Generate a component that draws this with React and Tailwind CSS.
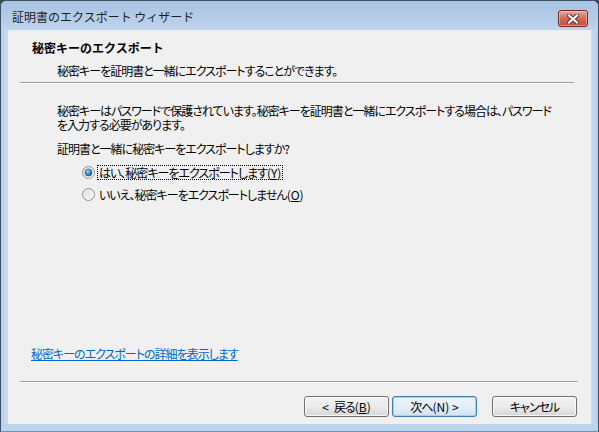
import React from "react";

function Radio({ checked }) {
  return (
    <svg width="13" height="13" viewBox="0 0 13 13" className="shrink-0">
      <defs>
        <linearGradient id={checked ? "rg1" : "rg0"} x1="0" y1="0" x2="1" y2="1">
          <stop offset="0" stopColor="#d9d9d9" />
          <stop offset="1" stopColor="#ffffff" />
        </linearGradient>
        <radialGradient id={checked ? "dot1" : "dot0"} cx="0.4" cy="0.35" r="0.7">
          <stop offset="0" stopColor="#a8dcfa" />
          <stop offset="0.5" stopColor="#3a8fd6" />
          <stop offset="1" stopColor="#1b4f8f" />
        </radialGradient>
      </defs>
      <circle cx="6.5" cy="6.5" r="6" fill={`url(#${checked ? "rg1" : "rg0"})`} stroke="#8e8f8f" strokeWidth="1" />
      <circle cx="6.5" cy="6.5" r="4.6" fill="none" stroke="#f4f4f4" strokeWidth="0.8" />
      {checked && <circle cx="6.5" cy="6.5" r="3.6" fill="url(#dot1)" stroke="#1f5a96" strokeWidth="0.6" />}
    </svg>
  );
}

export default function App() {
  return (
    <div className="w-[599px] h-[432px] bg-[#3a4656] overflow-hidden">
      <div className="w-full h-full flex flex-col rounded-t-[6px] border border-[#3b4f66] border-b-[#48a8c0] bg-[#bcd3ec]">
        {/* title bar */}
        <div className="h-[29px] flex items-start justify-between rounded-t-[6px] bg-gradient-to-b from-[#a8c2e0] to-[#bfd4ec]">
          <div className="mt-[8px] ml-[11px] text-[12px] leading-[16px] text-[#1e1e1e] font-['Noto_Sans_CJK_JP','Noto_Sans',sans-serif] whitespace-nowrap">
            証明書のエクスポート ウィザード
          </div>
          <div className="mt-[9px] mr-[10px] w-[30px] h-[17px] rounded-[3px] border border-[#6e2a22] bg-gradient-to-b from-[#e6a89d] via-[#d26a5a] to-[#c44a3a] flex items-center justify-center shadow-[inset_0_0_0_1px_rgba(255,220,210,0.5)]">
            <svg width="12" height="10" viewBox="0 0 12 10">
              <path d="M2 1.5 L10 8.5 M10 1.5 L2 8.5" stroke="#5a2a26" strokeWidth="4" strokeLinecap="square" />
              <path d="M2 1.5 L10 8.5 M10 1.5 L2 8.5" stroke="#ffffff" strokeWidth="2.2" strokeLinecap="square" />
            </svg>
          </div>
        </div>
        {/* body row */}
        <div className="flex flex-row h-[394px]">
          <div className="w-[7px] bg-gradient-to-r from-[#bcd3ec] to-[#c7dbf0]" />
          <div className="w-[583px] h-[394px] bg-[#f0f0f0] flex flex-col text-black font-['Noto_Sans_CJK_JP','Noto_Sans',sans-serif] text-[12px]">
            <div className="mt-[10px] ml-[24px] font-bold leading-[16px] whitespace-nowrap">
              秘密キーのエクスポート
            </div>
            <div className="mt-[7px] ml-[49px] leading-[16px] whitespace-nowrap tracking-[-1px] [font-feature-settings:'palt']">
              秘密キーを証明書と一緒にエクスポートすることができます。
            </div>
            <div className="mt-[3px] ml-[12px] mr-[17px]">
              <div className="h-px bg-[#a0a0a0]" />
              <div className="h-px bg-white" />
            </div>
            <p className="mt-[20px] ml-[49px] leading-[14px] whitespace-nowrap tracking-[-1px] [font-feature-settings:'palt']">
              秘密キーはパスワードで保護されています。秘密キーを証明書と一緒にエクスポートする場合は、パスワード
              <br />
              を入力する必要があります。
            </p>
            <div className="mt-[10px] ml-[49px] leading-[13px] whitespace-nowrap tracking-[-1px] [font-feature-settings:'palt']">
              証明書と一緒に秘密キーをエクスポートしますか<span className="tracking-normal">?</span>
            </div>
            <div className="mt-[9px] ml-[74px] h-[16px] flex items-center gap-[2px] tracking-[-1px] [font-feature-settings:'palt']">
              <Radio checked />
              <span className="border border-dotted border-black leading-[13px] px-[1px] whitespace-nowrap">
                はい、秘密キーをエクスポートします<span className="tracking-normal">(<span className="underline">Y</span>)</span>
              </span>
            </div>
            <div className="mt-[6px] ml-[74px] h-[16px] flex items-center gap-[3px] tracking-[-1px] [font-feature-settings:'palt']">
              <Radio checked={false} />
              <span className="leading-[13px] px-[1px] whitespace-nowrap">
                いいえ、秘密キーをエクスポートしません<span className="tracking-normal">(<span className="underline">O</span>)</span>
              </span>
            </div>
            <div className="flex-1" />
            <div className="ml-[23px] leading-[16px] text-[#0066cc] underline whitespace-nowrap tracking-[-1px] [font-feature-settings:'palt']">
              秘密キーのエクスポートの詳細を表示します
            </div>
            <div className="mt-[19px] ml-[12px] mr-[13px]">
              <div className="h-px bg-[#a0a0a0]" />
              <div className="h-px bg-white" />
            </div>
            <div className="mt-[13px] mb-[7px] mr-[14px] flex justify-end [font-feature-settings:'palt']">
              <div className="w-[85px] h-[21px] rounded-[3px] border border-[#707070] bg-gradient-to-b from-[#f2f2f2] via-[#ebebeb] to-[#d6d6d6] shadow-[inset_0_0_0_1px_rgba(255,255,255,0.8)] flex items-center justify-center leading-[14px] whitespace-nowrap">
                <span>&lt;</span><span className="ml-[5px] tracking-[-1px]">戻る</span><span>(<span className="underline">B</span>)</span>
              </div>
              <div className="ml-[3px] w-[85px] h-[21px] rounded-[3px] border border-[#3c7fb1] bg-gradient-to-b from-[#eef5fb] via-[#e4eef8] to-[#d3e2f0] shadow-[inset_0_0_0_1px_#9bd4f5] flex items-center justify-center leading-[14px] whitespace-nowrap">
                <span className="tracking-[-1px]">次へ</span><span>(N) &gt;</span>
              </div>
              <div className="ml-[15px] w-[85px] h-[21px] rounded-[3px] border border-[#707070] bg-gradient-to-b from-[#f2f2f2] via-[#ebebeb] to-[#d6d6d6] shadow-[inset_0_0_0_1px_rgba(255,255,255,0.8)] flex items-center justify-center leading-[14px] whitespace-nowrap tracking-[-1px]">
                キャンセル
              </div>
            </div>
          </div>
          <div className="w-[7px] bg-gradient-to-r from-[#c7dbf0] to-[#b6cfea]" />
        </div>
        <div className="flex-1 bg-[#bcd3ec]" />
      </div>
    </div>
  );
}
